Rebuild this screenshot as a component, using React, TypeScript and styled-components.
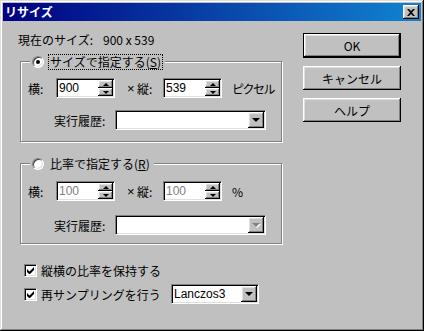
import styled, { createGlobalStyle } from 'styled-components'

const GlobalStyle = createGlobalStyle`
  html, body {
    margin: 0;
    padding: 0;
    background: #c0c0c0;
  }
  body {
    font-family: "Noto Sans CJK JP", "Liberation Sans", sans-serif;
    font-size: 12px;
    color: #000;
  }
`

const raised = `
  box-shadow: inset -1px -1px #000, inset 1px 1px #fff, inset -2px -2px #808080, inset 2px 2px #dfdfdf;
`

const sunken = `
  border: 1px solid;
  border-color: #808080 #fff #fff #808080;
  box-shadow: inset 1px 1px #000, inset -1px -1px #dfdfdf;
`

const Window = styled.div`
  width: 424px;
  height: 331px;
  box-sizing: border-box;
  padding: 3px;
  background: #c0c0c0;
  box-shadow: inset -1px -1px #000, inset 1px 1px #dfdfdf, inset -2px -2px #808080, inset 2px 2px #fff;
  display: flex;
  flex-direction: column;
`

const TitleBar = styled.div`
  height: 18px;
  display: flex;
  align-items: center;
  justify-content: space-between;
  padding-left: 2px;
  background: linear-gradient(to right, #000080, #1084d0);
  color: #fff;
  font-weight: bold;
  line-height: 18px;
`

const CloseButton = styled.div`
  width: 16px;
  height: 14px;
  margin-right: 2px;
  background: #c0c0c0;
  display: flex;
  align-items: center;
  justify-content: center;
  ${raised}
`

const Body = styled.div`
  display: flex;
  gap: 21px;
  padding: 12px 0 0 17px;
`

const LeftColumn = styled.div`
  width: 262px;
  display: flex;
  flex-direction: column;
`

const RightColumn = styled.div`
  width: 98px;
  display: flex;
  flex-direction: column;
  gap: 8px;
`

const CurrentSize = styled.div`
  height: 14px;
  line-height: 14px;
  margin-left: -2px;
  display: flex;
`

const CurrentLabel = styled.span`
  width: 85px;
`

const GroupBox = styled.div<{ $top: number; $padTop: number; $gap: number }>`
  position: relative;
  box-sizing: border-box;
  height: 81px;
  margin-top: ${(p) => p.$top}px;
  padding-top: ${(p) => p.$padTop}px;
  border: 1px solid #808080;
  box-shadow: inset 1px 1px #fff, 1px 1px #fff;
  display: flex;
  flex-direction: column;
  gap: ${(p) => p.$gap}px;
`

const Legend = styled.div`
  position: absolute;
  top: -8px;
  left: 9px;
  padding: 0 2px;
  height: 16px;
  display: flex;
  align-items: center;
  gap: 4px;
  background: #c0c0c0;
`

const LegendText = styled.span<{ $focused?: boolean }>`
  height: 14px;
  line-height: 14px;
  padding: 0 1px;
  border: 1px dotted ${(p) => (p.$focused ? '#000' : 'transparent')};
`

const Radio = styled.span<{ $checked?: boolean }>`
  width: 12px;
  height: 12px;
  box-sizing: border-box;
  border-radius: 50%;
  background: #fff;
  border: 1px solid;
  border-color: #808080 #fff #fff #808080;
  box-shadow: inset 1px 1px #404040, inset -1px -1px #dfdfdf;
  display: flex;
  align-items: center;
  justify-content: center;
  &::after {
    content: '';
    width: 4px;
    height: 4px;
    border-radius: 50%;
    background: ${(p) => (p.$checked ? '#000' : 'transparent')};
  }
`

const FieldRow = styled.div<{ $indent: number }>`
  height: 20px;
  display: flex;
  align-items: center;
  padding-left: ${(p) => p.$indent}px;
`

const RowLabel = styled.span<{ $width: number }>`
  width: ${(p) => p.$width}px;
  flex-shrink: 0;
`

const Times = styled.span`
  width: 10px;
  margin-left: 12px;
  flex-shrink: 0;
  font-family: "Liberation Sans", sans-serif;
  font-size: 13px;
`

const Unit = styled.span`
  margin-left: 10px;
  letter-spacing: -1.5px;
  white-space: nowrap;
`

const Field = styled.div<{ $width: number }>`
  box-sizing: border-box;
  width: ${(p) => p.$width}px;
  height: 20px;
  flex-shrink: 0;
  background: #fff;
  display: flex;
  align-items: stretch;
  padding: 1px;
  ${sunken}
`

const FieldValue = styled.span<{ $disabled?: boolean }>`
  flex: 1;
  padding-left: 1px;
  line-height: 16px;
  font-family: "Liberation Sans", "Noto Sans CJK JP", sans-serif;
  color: ${(p) => (p.$disabled ? '#808080' : '#000')};
`

const Spinner = styled.div`
  width: 15px;
  display: flex;
  flex-direction: column;
`

const SpinButton = styled.div<{ $down?: boolean }>`
  flex: 1;
  background: #c0c0c0;
  display: flex;
  align-items: center;
  justify-content: center;
  ${raised}
  &::after {
    content: '';
    border-left: 3px solid transparent;
    border-right: 3px solid transparent;
    ${(p) => (p.$down ? 'border-top: 3px solid #000;' : 'border-bottom: 3px solid #000;')}
  }
`

const DropButton = styled.div<{ $disabled?: boolean }>`
  width: 16px;
  background: #c0c0c0;
  display: flex;
  align-items: center;
  justify-content: center;
  ${raised}
  &::after {
    content: '';
    border-left: 4px solid transparent;
    border-right: 4px solid transparent;
    border-top: 4px solid ${(p) => (p.$disabled ? '#808080' : '#000')};
    ${(p) => (p.$disabled ? 'filter: drop-shadow(1px 1px 0 #fff);' : '')}
  }
`

const Checks = styled.div`
  margin: 20px 0 0 4px;
  display: flex;
  flex-direction: column;
  gap: 7px;
`

const CheckRow = styled.div<{ $height: number }>`
  height: ${(p) => p.$height}px;
  display: flex;
  align-items: center;
`

const CheckBox = styled.span`
  width: 13px;
  height: 13px;
  box-sizing: border-box;
  background: #fff;
  display: flex;
  align-items: center;
  justify-content: center;
  ${sunken}
`

const CheckLabel = styled.span<{ $width?: number }>`
  margin-left: 4px;
  ${(p) => (p.$width ? `width: ${p.$width}px;` : '')}
`

const Button = styled.div<{ $default?: boolean }>`
  box-sizing: border-box;
  height: ${(p) => (p.$default ? 25 : 24)}px;
  background: #c0c0c0;
  display: flex;
  align-items: center;
  justify-content: center;
  border: ${(p) => (p.$default ? '1px solid #000' : 'none')};
  ${raised}
`

function CheckMark() {
  return (
    <svg width="7" height="7" viewBox="0 0 7 7">
      <path d="M0 2v3l2 2h1l4-4V0L2.5 4.5z" fill="#000" />
    </svg>
  )
}

function SpinField({ value, disabled }: { value: string; disabled?: boolean }) {
  return (
    <Field $width={59}>
      <FieldValue $disabled={disabled}>{value}</FieldValue>
      <Spinner>
        <SpinButton />
        <SpinButton $down />
      </Spinner>
    </Field>
  )
}

function Combo({ width, value, disabled }: { width: number; value?: string; disabled?: boolean }) {
  return (
    <Field $width={width}>
      <FieldValue $disabled={disabled}>{value}</FieldValue>
      <DropButton $disabled={disabled} />
    </Field>
  )
}

const groups = [
  { title: 'サイズで指定する', key: 'S', checked: true, w: '900', h: '539', unit: 'ピクセル', top: 14, padTop: 16, gap: 12 },
  { title: '比率で指定する', key: 'R', checked: false, w: '100', h: '100', unit: '%', top: 21, padTop: 17, gap: 14 },
]

export default function App() {
  return (
    <>
      <GlobalStyle />
      <Window>
        <TitleBar>
          <span>リサイズ</span>
          <CloseButton>
            <svg width="8" height="7" viewBox="0 0 8 7">
              <path d="M0 0h2l2 2 2-2h2L5 3.5 8 7H6L4 5 2 7H0l3-3.5z" fill="#000" />
            </svg>
          </CloseButton>
        </TitleBar>
        <Body>
          <LeftColumn>
            <CurrentSize>
              <CurrentLabel>現在のサイズ:</CurrentLabel>
              <span>900 x 539</span>
            </CurrentSize>
            {groups.map((g) => {
              const disabled = !g.checked
              return (
                <GroupBox key={g.key} $top={g.top} $padTop={g.padTop} $gap={g.gap}>
                  <Legend>
                    <Radio $checked={g.checked} />
                    <LegendText $focused={g.checked}>
                      {g.title}(<u>{g.key}</u>)
                    </LegendText>
                  </Legend>
                  <FieldRow $indent={7}>
                    <RowLabel $width={28}>横:</RowLabel>
                    <SpinField value={g.w} disabled={disabled} />
                    <Times>×</Times>
                    <RowLabel $width={26}>縦:</RowLabel>
                    <SpinField value={g.h} disabled={disabled} />
                    <Unit>{g.unit}</Unit>
                  </FieldRow>
                  <FieldRow $indent={33}>
                    <RowLabel $width={61}>実行履歴:</RowLabel>
                    <Combo width={151} disabled={disabled} />
                  </FieldRow>
                </GroupBox>
              )
            })}
            <Checks>
              <CheckRow $height={13}>
                <CheckBox>
                  <CheckMark />
                </CheckBox>
                <CheckLabel>縦横の比率を保持する</CheckLabel>
              </CheckRow>
              <CheckRow $height={20}>
                <CheckBox>
                  <CheckMark />
                </CheckBox>
                <CheckLabel $width={130}>再サンプリングを行う</CheckLabel>
                <Combo width={88} value="Lanczos3" />
              </CheckRow>
            </Checks>
          </LeftColumn>
          <RightColumn>
            <Button $default>OK</Button>
            <Button>キャンセル</Button>
            <Button>ヘルプ</Button>
          </RightColumn>
        </Body>
      </Window>
    </>
  )
}
